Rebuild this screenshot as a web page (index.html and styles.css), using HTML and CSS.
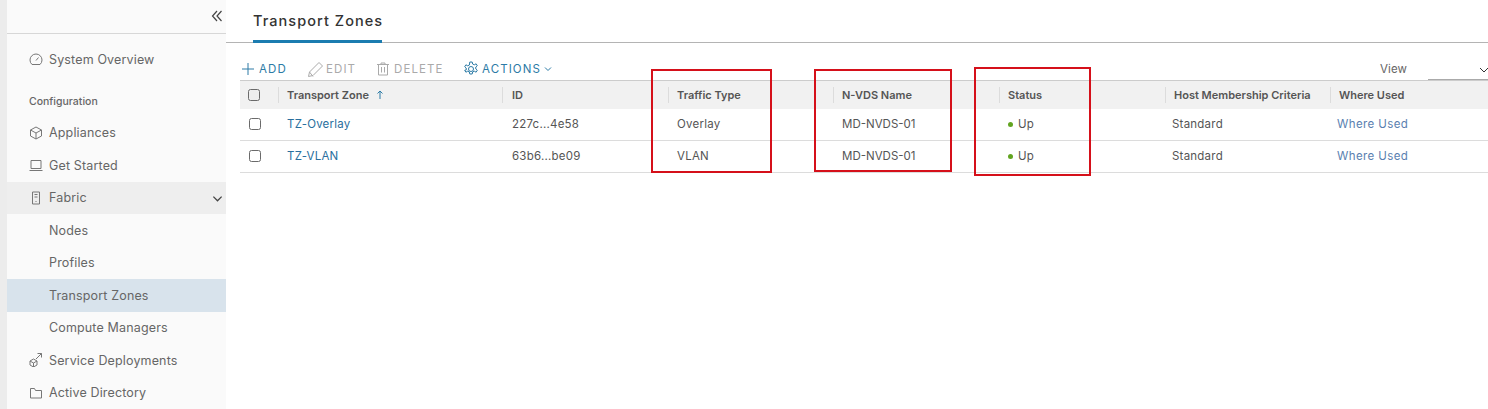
FILE: index.html
```html
<!DOCTYPE html>
<html lang="en">
<head>
<meta charset="utf-8">
<title>Transport Zones</title>
<link rel="stylesheet" href="styles.css">
</head>
<body>
<div class="app">
  <div class="strip"></div>
  <nav class="side">
    <div class="collapse">
      <svg class="i12" viewBox="0 0 12 12"><path d="M6 1 1.500 6 6 11M10.500 1 6 6l4.500 5"/></svg>
    </div>
    <a class="item first"><svg class="ico" viewBox="0 0 14 14"><path d="M3 12.500A6 6 0 0 1 1 8a6 6 0 0 1 12 0 6 6 0 0 1-2 4.500zM7 8.500l2.500-3"/></svg>System Overview</a>
    <div class="group">Configuration</div>
    <a class="item"><svg class="ico" viewBox="0 0 14 14"><path d="M7 1 12.500 4v6L7 13 1.500 10V4zM1.500 4 7 7l5.500-3M7 7v6"/></svg>Appliances</a>
    <a class="item"><svg class="ico" viewBox="0 0 14 14"><path d="M2 2.500h10v8H2zM.5 12.500h13"/></svg>Get Started</a>
    <a class="item open"><svg class="ico" viewBox="0 0 14 14"><path d="M3.500 1h7v12h-7zM5.500 3.500h3M5.500 6h3M7 10v1"/></svg>Fabric<svg class="chev" viewBox="0 0 12 12"><path d="M1.500 4 6 8.500 10.500 4"/></svg></a>
    <a class="item sub">Nodes</a>
    <a class="item sub">Profiles</a>
    <a class="item sub active">Transport Zones</a>
    <a class="item sub">Compute Managers</a>
    <a class="item"><svg class="ico" viewBox="0 0 14 14"><path d="M4.500 6 8 8v4l-3.500 2L1 12V8zM1 8l3.500 2L8 8M4.500 10v4M7 6l5.500-5.500M8.500.5h4v4"/></svg>Service Deployments</a>
    <a class="item"><svg class="ico" viewBox="0 0 14 14"><path d="M1.500 12V2.500h4l1 2h6V12z"/></svg>Active Directory</a>
  </nav>
  <main class="main">
    <div class="tabs"><span class="tab">Transport Zones</span></div>
    <div class="tools">
      <span class="btn on add"><svg class="t14" viewBox="0 0 14 14"><path d="M7 1v12M1 7h12"/></svg>ADD</span>
      <span class="btn edit"><svg class="t16" viewBox="0 0 16 16"><path d="M.5 15.500l1-4.500 9.500-9.500 3.500 3.500-9.500 9.500zM1.500 11l3.500 4.500"/></svg>EDIT</span>
      <span class="btn del"><svg class="t14" viewBox="0 0 14 14"><path d="M1 2.500h12M5 2.500V1h4v1.500M2.500 2.500V13h9V2.500M5.500 5v5.500M8.500 5v5.500"/></svg>DELETE</span>
      <span class="btn on act"><svg class="t16" viewBox="0 0 16 16"><circle cx="8" cy="8" r="2.500"/><path d="M6.800 1h2.400l.4 2 1.700.8 1.800-1 1.200 1.900-1.500 1.300v2l1.500 1.300-1.200 1.900-1.800-1-1.700.8-.4 2H6.800l-.4-2-1.700-.8-1.800 1-1.200-1.900L3.200 9V7L1.700 5.700l1.200-1.900 1.800 1 1.700-.8z"/></svg>ACTIONS<svg class="t6" viewBox="0 0 8 8"><path d="M1 2.500 4 5.500 7 2.500"/></svg></span>
      <span class="view"><span class="view-label">View</span><span class="select"><svg class="t8" viewBox="0 0 8 8"><path d="M0 2 4 6 8 2"/></svg></span></span>
    </div>
    <div class="table">
      <div class="row head">
        <div class="cell chk"><span class="box head-box"></span></div>
        <div class="cell">Transport Zone <svg class="up" viewBox="0 0 8 10"><path d="M4 9V1M1.500 3.500 4 1l2.500 2.500"/></svg></div>
        <div class="cell id">ID</div>
        <div class="cell">Traffic Type</div>
        <div class="cell">N-VDS Name</div>
        <div class="cell">Status</div>
        <div class="cell">Host Membership Criteria</div>
        <div class="cell">Where Used</div>
      </div>
      <div class="row">
        <div class="cell chk"><span class="box"></span></div>
        <div class="cell"><a class="link">TZ-Overlay</a></div>
        <div class="cell id">227c...4e58</div>
        <div class="cell">Overlay</div>
        <div class="cell plain">MD-NVDS-01</div>
        <div class="cell"><span class="dot"></span>Up</div>
        <div class="cell tight">Standard</div>
        <div class="cell tight"><a class="used">Where Used</a></div>
      </div>
      <div class="row">
        <div class="cell chk"><span class="box"></span></div>
        <div class="cell"><a class="link">TZ-VLAN</a></div>
        <div class="cell id">63b6...be09</div>
        <div class="cell">VLAN</div>
        <div class="cell plain">MD-NVDS-01</div>
        <div class="cell"><span class="dot"></span>Up</div>
        <div class="cell tight">Standard</div>
        <div class="cell tight"><a class="used">Where Used</a></div>
      </div>
    </div>
  </main>
  <div class="mark m1"></div>
  <div class="mark m2"></div>
  <div class="mark m3"></div>
</div>
</body>
</html>
```
FILE: styles.css
```css
* { box-sizing: border-box; }
html, body { margin: 0; height: 100%; overflow: hidden; background: #fff; }
body { font-family: "Inter", "Liberation Sans", sans-serif; font-size: 12px; color: #565656; }
svg { fill: none; stroke: currentColor; stroke-width: 1; flex: none; }

.app { position: relative; display: flex; width: 1488px; height: 409px; overflow: hidden; }
.strip { width: 7px; background: #ececec; }
.side { width: 219px; background: #fafafa; color: #666; }
.collapse { height: 34px; border-bottom: 1px solid #d7d7d7; display: flex; justify-content: flex-end; align-items: center; padding: 0 3px 0 0; color: #444; }
.i12 { width: 12px; height: 12px; margin-bottom: 1px; stroke-width: 1.2; }

.item { display: flex; align-items: center; height: 32.500px; padding: 0 0 .4px 22px; font-size: 12.500px; letter-spacing: .15px; color: #666; white-space: nowrap; }
.item.first { margin-top: 9px; }
.ico { width: 14px; height: 14px; margin-right: 6px; color: #777; }
.group { height: 32px; margin-top: 9px; display: flex; align-items: center; padding: 2px 0 0 22px; font-size: 10.500px; font-weight: 500; color: #666; }
.open { background: #eeeeee; position: relative; }
.chev { position: absolute; right: 3px; top: 11px; width: 11px; height: 11px; color: #444; stroke-width: 1.4; }
.item.sub { padding-left: 42px; }
.active { background: #d8e3ec; }

.main { flex: 1; min-width: 0; padding-left: 14px; }
.tabs { height: 43px; margin-left: -14px; border-bottom: 1px solid #b4b4b4; padding-left: 27px; }
.tab { display: inline-block; width: 129px; height: 43px; padding-top: 12px; border-bottom: 3px solid #1b7cb0; font-size: 14.500px; font-weight: 500; letter-spacing: 1.050px; color: #333; white-space: nowrap; }

.tools { height: 37px; display: flex; align-items: flex-end; padding-bottom: 2px; font-size: 11.500px; letter-spacing: 1.100px; color: #aaa; }
.btn { display: flex; align-items: center; height: 18px; white-space: nowrap; }
.on { color: #2c7ba6; }
.add { margin-left: 1px; width: 67px; gap: 4px; }
.edit { width: 68px; gap: 2px; }
.del { width: 87px; gap: 4px; }
.act { gap: 3px; }
.t14 { width: 14px; height: 14px; }
.t16 { width: 16px; height: 16px; }
.t6 { width: 8px; height: 8px; }
.view { margin-left: auto; display: flex; align-items: flex-end; color: #666; letter-spacing: .1px; font-size: 11.500px; }
.view-label { margin-bottom: 2px; }
.select { width: 60px; height: 20px; margin-left: 21px; border-bottom: 1px solid #aaa; margin-bottom: -2px; display: flex; justify-content: flex-end; align-items: center; color: #333; }
.t8 { width: 8px; height: 8px; margin-top: 1px; }

.table { width: 1248px; }
.row { display: grid; grid-template-columns: 38px 224px 166px 165px 166px 166px 165px 158px; height: 32px; padding-bottom: 1px; border-bottom: 1px solid #dcdcdc; align-items: center; font-size: 11.500px; letter-spacing: .22px; color: #555; }
.row .cell { padding-left: 9px; white-space: nowrap; display: flex; align-items: center; }
.row .id { padding-left: 10px; }
.row .plain { letter-spacing: 0; }
.row .tight { padding-left: 7px; }
.row .used { letter-spacing: .4px; }
.row.head { height: 29px; padding-bottom: 0; background: #f1f1f1; border-top: 1px solid #ccc; border-bottom: 0; font-size: 11px; font-weight: 600; letter-spacing: 0; color: #555; }
.row.head .cell { height: 16px; border-left: 1px solid #dcdcdc; padding-left: 8px; }
.row.head .id { padding-left: 9px; }
.row.head .chk { border-left: 0; }
.box { width: 12px; height: 12px; border: 1px solid #6a6a6a; border-radius: 2.500px; background: #fff; }
.head-box { background: #eee; }
.up { width: 8px; height: 10px; margin-left: 7px; color: #2c7ba6; }
.link { color: #2a6f9e; }
.used { color: #5a7fb0; }
.dot { width: 5px; height: 5px; border-radius: 50%; background: #62a420; margin-right: 5px; }

.mark { position: absolute; border: 2px solid #d5101a; pointer-events: none; }
.m1 { left: 651px; top: 69px; width: 121px; height: 104px; }
.m2 { left: 814px; top: 69px; width: 138px; height: 103px; }
.m3 { left: 974px; top: 67px; width: 117px; height: 109px; }
```
